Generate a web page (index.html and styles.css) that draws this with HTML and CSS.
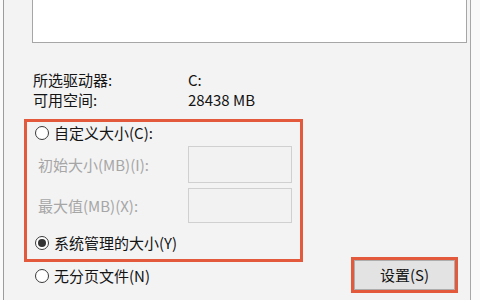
FILE: index.html
```html
<!DOCTYPE html>
<html lang="zh-CN">
    <head>
        <meta charset="utf-8">
        <title>虚拟内存</title>
        <link rel="stylesheet" href="styles.css">
    </head>
    <body>
        <div class='window'>

            <div class='listBox'></div>

            <div class='info'>
                <div class='infoRow'>
                    <div class='infoLabel'>所选驱动器:</div>
                    <div class='infoValue'>C:</div>
                </div>
                <div class='infoRow'>
                    <div class='infoLabel'>可用空间:</div>
                    <div class='infoValue'>28438 MB</div>
                </div>
            </div>

            <div class='highlight sizeGroup'>
                <div class='radioRow'>
                    <span class='radio'></span>
                    <span>自定义大小(C):</span>
                </div>
                <div class='fieldRow fieldFirst'>
                    <div class='fieldLabel'>初始大小(MB)(I):</div>
                    <div class='field'></div>
                </div>
                <div class='fieldRow fieldSecond'>
                    <div class='fieldLabel'>最大值(MB)(X):</div>
                    <div class='field'></div>
                </div>
                <div class='radioRow systemRow'>
                    <span class='radio checked'></span>
                    <span>系统管理的大小(Y)</span>
                </div>
            </div>

            <div class='bottomRow'>
                <div class='radioRow noFileRow'>
                    <span class='radio'></span>
                    <span>无分页文件(N)</span>
                </div>
                <div class='highlight buttonWrap'>
                    <div class='button'>设置(S)</div>
                </div>
            </div>

        </div>
    </body>
</html>
```

FILE: styles.css
```css
body
{
    margin:           0;
    background-color: #fafafa;
    font-family:      "Noto Sans CJK SC", "Noto Sans", sans-serif;
    font-size:        15px;
    line-height:      20px;
    color:            #141414;
}

.window
{
    margin-left:      3px;
    width:            466px;
    height:           300px;
    border-left:      1px solid #9c9c9c;
    border-right:     1px solid #a8a8a8;
    background-color: #f3f3f3;
    display:          flex;
    flex-direction:   column;
}

.listBox
{
    margin-left:      28px;
    width:            433px;
    height:           42px;
    background-color: #ffffff;
    border:           1px solid #a6a6a6;
    border-top:       none;
}

.info
{
    margin-top:       27px;
    padding-left:     29px;
}

.infoRow
{
    display:          flex;
    height:           20px;
}

.infoLabel
{
    width:            155px;
}

.highlight
{
    border:           3px solid #e2593b;
}

.sizeGroup
{
    margin-top:       9px;
    margin-left:      20px;
    width:            273px;
    height:           137px;
    display:          flex;
    flex-direction:   column;
}

.radioRow
{
    display:          flex;
    align-items:      center;
    height:           22px;
    padding-left:     8px;
}

.radio
{
    width:            12px;
    height:           12px;
    border:           1px solid #3a3a3a;
    border-radius:    50%;
    background-color: #ffffff;
    margin-right:     5px;
    display:          flex;
    align-items:      center;
    justify-content:  center;
}

.radio.checked::after
{
    content:          '';
    width:            8px;
    height:           8px;
    border-radius:    50%;
    background-color: #333333;
}

.fieldRow
{
    display:          flex;
    align-items:      center;
    padding-left:     11px;
}

.fieldFirst
{
    margin-top:       2px;
    height:           37px;
}

.fieldSecond
{
    margin-top:       5px;
    height:           35px;
}

.fieldLabel
{
    width:            150px;
    color:            #a6a6a6;
}

.field
{
    width:            102px;
    height:           calc(100% - 2px);
    border:           1px solid #d0d0d0;
    background-color: #f2f2f2;
}

.systemRow
{
    margin-top:       9px;
}

.bottomRow
{
    margin-top:       -5px;
    display:          flex;
    align-items:      flex-start;
}

.noFileRow
{
    margin-top:       8px;
    padding-left:     31px;
}

.buttonWrap
{
    margin-left:      auto;
    margin-right:     12px;
    width:            101px;
    height:           30px;
    display:          flex;
}

.button
{
    flex:             1;
    border:           1px solid #adadad;
    background-color: #e3e3e3;
    text-align:       center;
    line-height:      28px;
}
```
